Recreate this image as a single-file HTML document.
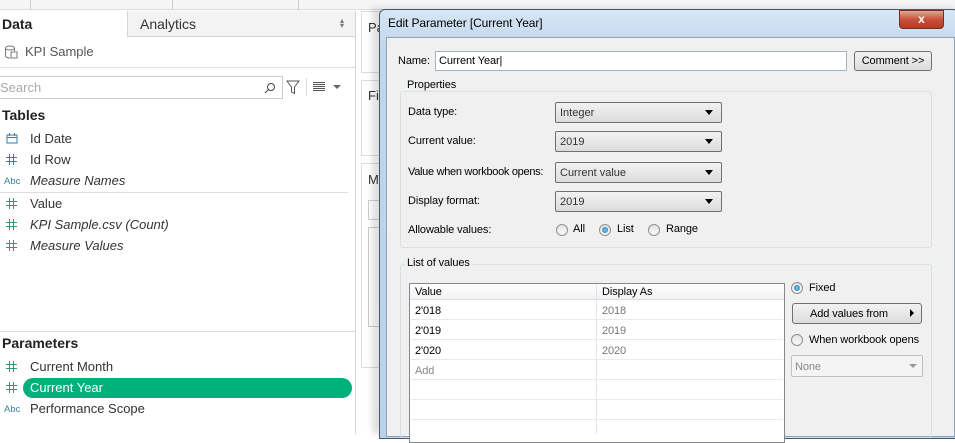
<!DOCTYPE html>
<html><head><style>
*{margin:0;padding:0;box-sizing:border-box}
body{width:955px;height:434px;overflow:hidden;background:#fff;font-family:"Liberation Sans",sans-serif;position:relative;color:#333}
.a{position:absolute}
.t{font-size:13px;white-space:nowrap}
.hash{position:absolute;width:11px;height:11px;--c:#2a9d78;background:
linear-gradient(90deg,transparent 3px,var(--c) 3px 4px,transparent 4px 7px,var(--c) 7px 8px,transparent 8px),
linear-gradient(transparent 3px,var(--c) 3px 4px,transparent 4px 7px,var(--c) 7px 8px,transparent 8px)}
.dlg{font-family:"Liberation Sans",sans-serif;font-size:11px;letter-spacing:-0.1px;color:#000;white-space:nowrap}
.dd{position:absolute;height:21px;border:1px solid #707070;border-radius:2px;background:linear-gradient(#f2f2f2,#dcdcdc);font-size:11px;padding:4px 4px}
.dd:after{content:"";position:absolute;right:8px;top:7px;border-left:4px solid transparent;border-right:4px solid transparent;border-top:5px solid #000}
.rad{position:absolute;width:12px;height:12px;border-radius:50%;border:1px solid #8e8f8f;background:linear-gradient(#e4e4e4,#fafafa)}
.rad.on:after{content:"";position:absolute;left:2px;top:2px;width:6px;height:6px;border-radius:50%;background:radial-gradient(#7fd0f5,#1b6fa8)}
.row{position:absolute;left:411px;width:372px;height:20px;border-bottom:1px solid #eaeaea}
</style></head><body>
<div class="a" style="left:0;top:0;width:955px;height:10px;background:#f5f5f5;border-bottom:1px solid #ddd"></div>
<div class="a" style="left:30px;top:0;width:1px;height:10px;background:#ccc"></div>
<div class="a" style="left:172px;top:0;width:1px;height:10px;background:#ccc"></div>
<div class="a" style="left:298px;top:0;width:1px;height:10px;background:#ccc"></div>
<div class="a" style="left:127px;top:11px;width:228px;height:26px;background:#f3f3f3;border-left:1px solid #d4d4d4;border-bottom:1px solid #d4d4d4"></div>
<div class="a t" style="left:2px;top:16px;font-weight:bold;font-size:14px;color:#222">Data</div>
<div class="a t" style="left:140px;top:16px;font-size:14px">Analytics</div>
<div class="a" style="left:340px;top:18px;font-size:8px;color:#777;line-height:5px">▴<br>▾</div>
<div class="a" style="left:355px;top:11px;width:1px;height:423px;background:#d4d4d4"></div>
<svg class="a" style="left:4px;top:44px" width="14" height="16"><ellipse cx="6" cy="4" rx="4.5" ry="2" fill="none" stroke="#777"/><path d="M1.5 4v8c0 1 2 2 4.5 2M10.5 4v3" fill="none" stroke="#777"/><rect x="7" y="8" width="6" height="6" fill="none" stroke="#777"/></svg>
<div class="a t" style="left:25px;top:44px;color:#555">KPI Sample</div>
<div class="a" style="left:0;top:67px;width:355px;height:1px;background:#e0e0e0"></div>
<div class="a" style="left:0;top:76px;width:283px;height:23px;border:1px solid #ccc;border-left:none"></div>
<div class="a t" style="left:0;top:80px;color:#aaa">Search</div>
<svg class="a" style="left:264px;top:82px" width="12" height="12"><circle cx="7" cy="5" r="3.5" fill="none" stroke="#444"/><path d="M4.5 7.5L1 11" stroke="#444"/></svg>
<svg class="a" style="left:286px;top:80px" width="14" height="15"><path d="M1 1h12L8.5 7v6.5L5.5 12V7z" fill="none" stroke="#555"/></svg>
<div class="a" style="left:306px;top:78px;width:1px;height:18px;background:#ddd"></div>
<div class="a" style="left:313px;top:82px;width:12px;height:9px;background:repeating-linear-gradient(#555 0 1px,transparent 1px 2px)"></div>
<div class="a" style="left:333px;top:85px;border-left:4px solid transparent;border-right:4px solid transparent;border-top:4px solid #666"></div>
<div class="a t" style="left:2px;top:107px;font-weight:bold;font-size:14px;color:#222">Tables</div>
<svg class="a" style="left:6px;top:133px" width="12" height="11"><rect x="1" y="2" width="10" height="8" fill="none" stroke="#3a7fa0"/><path d="M1 4.5h10M3.5 0v3M8.5 0v3" stroke="#3a7fa0"/></svg>
<div class="a t" style="left:30px;top:131px">Id Date</div>
<div class="hash" style="left:6px;top:154px;--c:#3a7fa0"></div><div class="a t" style="left:30px;top:152px">Id Row</div>
<div class="a" style="left:4px;top:176px;font-size:9.5px;color:#3a7fa0">Abc</div><div class="a t" style="left:30px;top:173px;font-style:italic">Measure Names</div>
<div class="a" style="left:0;top:192px;width:348px;height:1px;background:#ddd"></div>
<div class="hash" style="left:6px;top:198px"></div><div class="a t" style="left:30px;top:196px">Value</div>
<div class="hash" style="left:6px;top:219px"></div><div class="a t" style="left:30px;top:217px;font-style:italic">KPI Sample.csv (Count)</div>
<div class="hash" style="left:6px;top:240px"></div><div class="a t" style="left:30px;top:238px;font-style:italic">Measure Values</div>
<div class="a" style="left:0;top:331px;width:355px;height:1px;background:#ddd"></div>
<div class="a t" style="left:2px;top:335px;font-weight:bold;font-size:14px;color:#222">Parameters</div>
<div class="hash" style="left:6px;top:361px"></div><div class="a t" style="left:30px;top:359px">Current Month</div>
<div class="a" style="left:23px;top:378px;width:329px;height:20px;border-radius:10px;background:#00b07b"></div>
<div class="hash" style="left:6px;top:382px"></div><div class="a t" style="left:30px;top:380px;color:#fff">Current Year</div>
<div class="a" style="left:4px;top:404px;font-size:9.5px;color:#3a7fa0">Abc</div><div class="a t" style="left:30px;top:401px">Performance Scope</div>
<div class="a" style="left:361px;top:11px;width:20px;height:62px;border:1px solid #ddd"></div>
<div class="a t" style="left:368px;top:20px">Pa</div>
<div class="a" style="left:361px;top:80px;width:20px;height:76px;border:1px solid #ddd"></div>
<div class="a t" style="left:368px;top:88px">Fil</div>
<div class="a" style="left:361px;top:163px;width:20px;height:205px;border:1px solid #ddd"></div>
<div class="a t" style="left:368px;top:172px">Ma</div>
<div class="a" style="left:368px;top:200px;width:14px;height:20px;border:1px solid #ccc"></div>
<div class="a" style="left:368px;top:227px;width:14px;height:100px;border:1px solid #ccc"></div>
<div class="a" style="left:372px;top:8px;width:583px;height:426px;background:rgba(0,0,0,.12);filter:blur(3px)"></div>
<div class="a" style="left:379px;top:9px;width:580px;height:430px;border:1px solid #4a5a6a;border-radius:6px 6px 0 0;background:linear-gradient(#d7e6f5,#c0d6ec 40px,#b9d1ea)"></div>
<div class="a dlg" style="left:388px;top:16px;font-size:12px">Edit Parameter [Current Year]</div>
<div class="a" style="left:899px;top:10px;width:45px;height:19px;border:1px solid #7a2a1e;border-radius:0 0 4px 4px;background:linear-gradient(#e8a393,#c9503a 50%,#b63a22);color:#fff;font-weight:bold;font-size:12px;text-align:center;line-height:16px">x</div>
<div class="a" style="left:386px;top:37px;width:569px;height:400px;background:#f0f0f0;border:1px solid #8ea3b8"></div>
<div class="a dlg" style="left:398px;top:55px">Name:</div>
<div class="a" style="left:435px;top:51px;width:412px;height:20px;background:#fff;border:1px solid #a0b4c8"></div>
<div class="a dlg" style="left:439px;top:55px">Current Year|</div>
<div class="a dlg" style="left:854px;top:51px;width:78px;height:20px;border:1px solid #707070;border-radius:3px;background:linear-gradient(#f2f2f2,#dcdcdc);text-align:center;line-height:18px">Comment &gt;&gt;</div>
<div class="a" style="left:400px;top:91px;width:532px;height:157px;border:1px solid #d5dfe5;border-radius:3px"></div>
<div class="a dlg" style="left:405px;top:79px;background:#f0f0f0;padding:0 2px">Properties</div>
<div class="a dlg" style="left:408px;top:106px">Data type:</div>
<div class="dd" style="left:555px;top:102px;width:167px">Integer</div>
<div class="a dlg" style="left:408px;top:135px">Current value:</div>
<div class="dd" style="left:555px;top:131px;width:167px">2019</div>
<div class="a dlg" style="left:408px;top:166px;letter-spacing:-0.3px">Value when workbook opens:</div>
<div class="dd" style="left:555px;top:162px;width:167px">Current value</div>
<div class="a dlg" style="left:408px;top:195px">Display format:</div>
<div class="dd" style="left:555px;top:191px;width:167px">2019</div>
<div class="a dlg" style="left:408px;top:224px">Allowable values:</div>
<div class="rad" style="left:556px;top:224px"></div><div class="a dlg" style="left:573px;top:223px">All</div>
<div class="rad on" style="left:599px;top:224px"></div><div class="a dlg" style="left:617px;top:223px">List</div>
<div class="rad" style="left:648px;top:224px"></div><div class="a dlg" style="left:666px;top:223px">Range</div>
<div class="a" style="left:400px;top:264px;width:532px;height:174px;border:1px solid #d5dfe5;border-radius:3px"></div>
<div class="a dlg" style="left:405px;top:257px;background:#f0f0f0;padding:0 2px">List of values</div>
<div class="a" style="left:409px;top:283px;width:376px;height:160px;background:#fff;border:1px solid #828790"></div>
<div class="a" style="left:410px;top:284px;width:374px;height:16px;background:linear-gradient(#fff,#f1f2f4);border-bottom:1px solid #dde"></div>
<div class="a" style="left:596px;top:284px;width:1px;height:150px;background:#e5e5e5"></div>
<div class="a dlg" style="left:415px;top:286px">Value</div><div class="a dlg" style="left:602px;top:286px">Display As</div>
<div class="row" style="top:300px"></div><div class="row" style="top:320px"></div><div class="row" style="top:340px"></div><div class="row" style="top:360px"></div><div class="row" style="top:380px"></div><div class="row" style="top:400px"></div>
<div class="a dlg" style="left:415px;top:305px">2'018</div><div class="a dlg" style="left:602px;top:305px;color:#777">2018</div>
<div class="a dlg" style="left:415px;top:325px">2'019</div><div class="a dlg" style="left:602px;top:325px;color:#777">2019</div>
<div class="a dlg" style="left:415px;top:345px">2'020</div><div class="a dlg" style="left:602px;top:345px;color:#777">2020</div>
<div class="a dlg" style="left:415px;top:365px;color:#888">Add</div>
<div class="rad on" style="left:791px;top:282px"></div><div class="a dlg" style="left:809px;top:282px">Fixed</div>
<div class="a dlg" style="left:792px;top:303px;width:130px;height:21px;border:1px solid #707070;border-radius:3px;background:linear-gradient(#f2f2f2,#dcdcdc);padding:4px 0 0 17px">Add values from</div>
<div class="a" style="left:910px;top:309px;border-top:4px solid transparent;border-bottom:4px solid transparent;border-left:4px solid #000"></div>
<div class="rad" style="left:791px;top:334px"></div><div class="a dlg" style="left:809px;top:334px">When workbook opens</div>
<div class="a dlg" style="left:791px;top:355px;width:132px;height:22px;border:1px solid #c0c0c0;border-radius:2px;background:#f4f4f4;color:#888;padding:5px 3px">None</div>
<div class="a" style="left:909px;top:364px;border-left:4px solid transparent;border-right:4px solid transparent;border-top:4px solid #999"></div>
</body></html>
